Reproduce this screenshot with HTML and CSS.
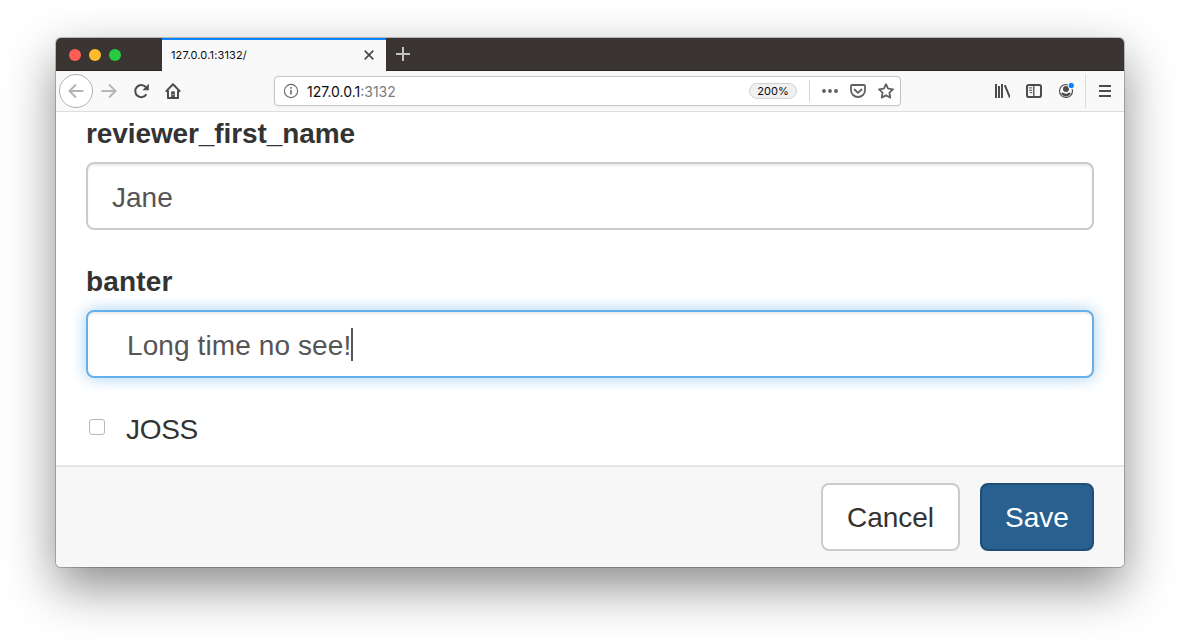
FILE: index.html
```html
<!DOCTYPE html>
<html lang="en">
<head>
<meta charset="utf-8">
<title>127.0.0.1:3132/</title>
<link rel="stylesheet" href="styles.css">
</head>
<body>
<div class="window">
  <header class="tabbar">
    <div class="lights"><i class="light red"></i><i class="light yellow"></i><i class="light green"></i></div>
    <div class="tab">
      <span class="tab-title">127.0.0.1:3132/</span>
      <svg class="close" width="10" height="10" viewBox="0 0 10 10"><path d="M.7.7l8.6 8.6M9.3.7L.7 9.3" stroke="#4a4a4c" stroke-width="1.7" fill="none"/></svg>
    </div>
    <svg class="plus" width="14" height="14" viewBox="0 0 14 14"><path d="M7 0v14M0 7h14" stroke="#c4c3c1" stroke-width="2"/></svg>
  </header>
  <nav class="toolbar">
    <span class="back"><svg width="16" height="16" viewBox="0 0 16 16"><path d="M15.5 8H1.5M8 1.5L1.5 8 8 14.5" class="stroke muted"/></svg></span>
    <span class="tool"><svg width="16" height="16" viewBox="0 0 16 16"><path d="M.5 8h14M8 1.5L14.5 8 8 14.5" class="stroke muted"/></svg></span>
    <span class="tool"><svg width="16" height="16" viewBox="0 0 16 16"><path d="M13.4 11.2A6 6 0 1 1 12.8 4.2" class="stroke"/><path d="M15.8.8v6.4H9.4z" fill="#4c4c4f"/></svg></span>
    <span class="tool"><svg width="16" height="16" viewBox="0 0 16 16"><path d="M.8 8.6L8 1.3l7.2 7.3M3 7.5v7.6h10V7.5" class="stroke" stroke-linejoin="round"/><path d="M6.200 15V9.200c0-.6.4-1 1-1h1.600c.6 0 1 .4 1 1V15z" fill="#4c4c4f"/><path d="M8 11v1.200" stroke="#f9f9fa" stroke-width="1"/></svg></span>
    <div class="urlbar">
      <svg width="16" height="16" viewBox="0 0 16 16"><circle cx="8" cy="8" r="6.6" fill="none" stroke="#68686a" stroke-width="1.1"/><path d="M8 7v4.6M8 4v1.8" stroke="#68686a" stroke-width="1.6"/></svg>
      <span class="address">127.0.0.1<span class="port">:3132</span></span>
      <span class="zoom">200%</span>
      <span class="url-divider"></span>
      <svg class="dots" width="16" height="16" viewBox="0 0 16 16" fill="#5e5e60"><circle cx="2" cy="8" r="1.9"/><circle cx="8" cy="8" r="1.9"/><circle cx="14" cy="8" r="1.9"/></svg>
      <svg class="page-action" width="16" height="16" viewBox="0 0 16 16"><path d="M2 2h12a1 1 0 0 1 1 1v4.2a7 6.8 0 0 1-14 0V3a1 1 0 0 1 1-1z" class="stroke soft"/><path d="M4.5 6.5L8 9.8l3.5-3.3" class="stroke soft" stroke-linecap="round" stroke-linejoin="round"/></svg>
      <svg class="page-action" width="16" height="16" viewBox="0 0 16 16"><path d="M8 1.2l2.100 4.500 4.900.6-3.600 3.400.9 4.900L8 12.200l-4.300 2.400.9-4.900L1 6.300l4.900-.6z" class="stroke soft" stroke-linejoin="round"/></svg>
    </div>
    <span class="tool library"><svg width="16" height="16" viewBox="0 0 16 16"><path d="M2 1v14M5 3v12M8 1v14" class="stroke"/><path d="M10.800 2.200L16 14.700" class="stroke"/></svg></span>
    <span class="tool"><svg width="16" height="16" viewBox="0 0 16 16"><rect x="1" y="2" width="14" height="12" rx="1.800" class="stroke"/><path d="M7.800 2v12" stroke="#4c4c4f" stroke-width="1.300"/><path d="M3 4.900h3.200M3 7.300h3.200M3.600 9.600h2.600" stroke="#4c4c4f" stroke-width="1"/></svg></span>
    <span class="tool account"><svg width="16" height="16" viewBox="0 0 16 16"><circle cx="8" cy="8" r="6.500" fill="none" stroke="#4c4c4f" stroke-width="1.200"/><circle cx="8" cy="6.100" r="3" fill="#4c4c4f"/><path d="M3.200 10c.8-.6 1.600-.7 2.300-.2 1.600 1.100 3.400 1.100 5 0 .7-.5 1.500-.4 2.300.2-.7 2.200-2.600 3.400-4.800 3.400S3.900 12.200 3.200 10z" fill="#4c4c4f"/><path d="M4.800 9.100c1.700 1.300 4.700 1.300 6.400 0" fill="none" stroke="#f9f9fa" stroke-width=".7"/><circle cx="13.300" cy="2.500" r="3.500" fill="#f9f9fa"/><circle cx="13.300" cy="2.500" r="2.600" fill="#0a84ff"/></svg></span>
    <span class="menu"><svg width="12" height="12" viewBox="0 0 12 12"><path d="M0 1h12M0 6h12M0 11h12" class="stroke"/></svg></span>
  </nav>
  <main class="form">
    <label class="label name-label">reviewer_first_name</label>
    <div class="field">Jane</div>
    <label class="label">banter</label>
    <div class="field focused"><span class="banter">Long time no see!</span><i class="caret"></i></div>
    <div class="check-row"><span class="checkbox"></span><span class="joss">JOSS</span></div>
  </main>
  <footer class="footer">
    <button class="btn cancel">Cancel</button>
    <button class="btn save">Save</button>
  </footer>
</div>
</body>
</html>
```
FILE: styles.css
```css
* { box-sizing: border-box; }
body {
  margin: 0;
  padding: 38px 56px 0;
  height: 641px;
  overflow: hidden;
  background: #fff;
  font-family: "Liberation Sans", Arial, sans-serif;
}
svg { display: block; flex: none; }
.window {
  width: 1068px;
  height: 529px;
  border-radius: 5px;
  background: #fff;
  overflow: hidden;
  display: flex;
  flex-direction: column;
  box-shadow: 0 0 0 1px rgba(0,0,0,.22), 0 20px 50px rgba(0,0,0,.46);
}
.tabbar {
  height: 33px;
  background: #3a3532;
  border-bottom: 1px solid #282422;
  display: flex;
  align-items: center;
  flex: none;
}
.lights { width: 106px; padding: 2px 0 0 13px; display: flex; gap: 8px; }
.light { width: 12px; height: 12px; border-radius: 50%; }
.red { background: #ff5e57; }
.yellow { background: #ffbb2e; }
.green { background: #28ca41; }
.tab {
  width: 224px;
  height: 33px;
  margin-bottom: -1px;
  padding: 0 12px 2px 9px;
  background: #f9f9fa;
  border-top: 2px solid #0a84ff;
  display: flex;
  align-items: center;
  justify-content: space-between;
}
.tab-title { font: 11px/14px Inter, sans-serif; color: #0c0c0d; letter-spacing: .15px; }
.plus { margin-left: 10px; }
.toolbar {
  height: 41px;
  flex: none;
  background: #f9f9fa;
  border-bottom: 1px solid #dcdcdc;
  padding-left: 3px;
  display: flex;
  align-items: center;
}
.stroke { fill: none; stroke: #4c4c4f; stroke-width: 2; }
.muted { stroke: #b5b5b6; }
.soft { stroke: #626264; stroke-width: 1.8; }
.back {
  width: 34px;
  height: 34px;
  border: 1px solid #b1b1b1;
  border-radius: 50%;
  background: #fff;
  display: grid;
  place-items: center;
}
.tool { width: 32px; height: 32px; display: grid; place-items: center; }
.urlbar {
  width: 627px;
  height: 30px;
  margin-left: 85px;
  padding: 0 6px 0 8px;
  background: #fff;
  border: 1px solid #c4c4c4;
  border-radius: 4px;
  box-shadow: 0 1px 3px rgba(0,0,0,.05);
  display: flex;
  align-items: center;
}
.address { margin-left: 8px; padding-top: 2px; font: 14px/18px Inter, sans-serif; color: #0c0c0d; }
.port { color: #7c7c7d; }
.zoom {
  width: 48px;
  height: 16px;
  margin-left: auto;
  border: 1px solid #d2d2d2;
  border-radius: 8px;
  background: #f0f0f0;
  font: 11px/14px Inter, sans-serif;
  color: #0c0c0d;
  text-align: center;
}
.url-divider { width: 1px; height: 22px; margin-left: 12px; background: #d2d2d2; }
.dots { margin-left: 12px; }
.page-action { margin-left: 12px; }
.library { margin-left: 85px; }
.menu {
  width: 39px;
  height: 34px;
  margin-left: 3px;
  border-left: 1px solid #dcdcdc;
  display: grid;
  place-items: center;
}
.form { flex: 1; padding: 0 30px; font-size: 28px; line-height: 40px; color: #333; }
.label { display: block; height: 40px; padding-top: 2px; margin-bottom: 10px; font-weight: bold; letter-spacing: .15px; }
.name-label { letter-spacing: -.1px; }
.field {
  height: 68px;
  margin-bottom: 30px;
  padding: 3px 24px 0;
  border: 2px solid #ccc;
  border-radius: 8px;
  box-shadow: inset 0 2px 2px rgba(0,0,0,.075);
  color: #555;
  display: flex;
  align-items: center;
}
.focused {
  padding-left: 39px;
  border-color: #66afe9;
  box-shadow: inset 0 2px 2px rgba(0,0,0,.075), 0 0 16px rgba(102,175,233,.6);
}
.banter { letter-spacing: .1px; }
.caret { width: 2px; height: 33px; margin-top: -3px; background: #555; }
.check-row { display: flex; }
.joss { padding-top: 2px; letter-spacing: -.3px; }
.checkbox {
  width: 16px;
  height: 16px;
  margin: 11px 21px 0 3px;
  border: 1px solid #b8b8b8;
  border-radius: 3px;
}
.footer {
  height: 102px;
  flex: none;
  padding: 16px 30px;
  background: #f7f7f7;
  border-top: 2px solid #e5e5e5;
  display: flex;
  justify-content: flex-end;
  gap: 20px;
}
.btn {
  height: 68px;
  padding: 2px 0 0;
  border: 2px solid #ccc;
  border-radius: 8px;
  font: 28px/40px "Liberation Sans", Arial, sans-serif;
}
.cancel { width: 139px; color: #333; background: #fff; }
.save { width: 114px; color: #fff; background: #286090; border-color: #204d74; }
```
